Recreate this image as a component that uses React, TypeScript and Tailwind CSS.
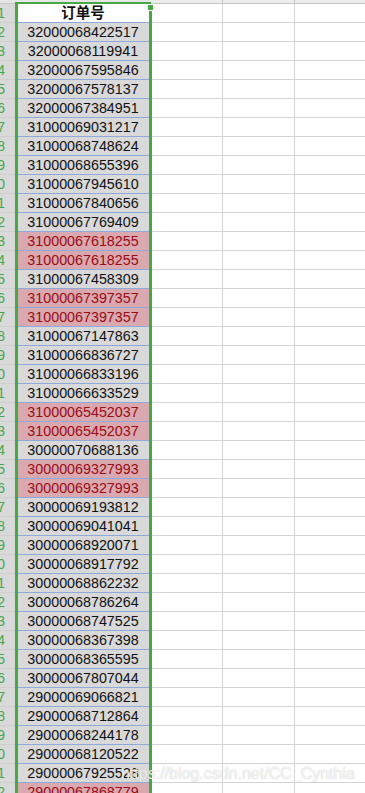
const orders: { id: string; dup?: boolean }[] = [
  { id: '32000068422517' },
  { id: '32000068119941' },
  { id: '32000067595846' },
  { id: '32000067578137' },
  { id: '32000067384951' },
  { id: '31000069031217' },
  { id: '31000068748624' },
  { id: '31000068655396' },
  { id: '31000067945610' },
  { id: '31000067840656' },
  { id: '31000067769409' },
  { id: '31000067618255', dup: true },
  { id: '31000067618255', dup: true },
  { id: '31000067458309' },
  { id: '31000067397357', dup: true },
  { id: '31000067397357', dup: true },
  { id: '31000067147863' },
  { id: '31000066836727' },
  { id: '31000066833196' },
  { id: '31000066633529' },
  { id: '31000065452037', dup: true },
  { id: '31000065452037', dup: true },
  { id: '30000070688136' },
  { id: '30000069327993', dup: true },
  { id: '30000069327993', dup: true },
  { id: '30000069193812' },
  { id: '30000069041041' },
  { id: '30000068920071' },
  { id: '30000068917792' },
  { id: '30000068862232' },
  { id: '30000068786264' },
  { id: '30000068747525' },
  { id: '30000068367398' },
  { id: '30000068365595' },
  { id: '30000067807044' },
  { id: '29000069066821' },
  { id: '29000068712864' },
  { id: '29000068244178' },
  { id: '29000068120522' },
  { id: '29000067925528' },
  { id: '29000067868779', dup: true },
];

function Row({ num, children, cellClass }: { num: number; children: React.ReactNode; cellClass: string }) {
  return (
    <div className="flex h-[19px] shrink-0">
      <div className="w-[15px] shrink-0 overflow-hidden bg-[#d9d9d9] border-b border-[#cfcfcf] flex justify-end pr-[10px] text-[14px] leading-[18px] text-[#45a845]">
        <span className="whitespace-nowrap">{num}</span>
      </div>
      <div className={`w-[136px] shrink-0 border-b border-[#8eaadb] text-center text-[14.3px] leading-[18px] ${cellClass}`}>
        {children}
      </div>
      <div className="w-[72px] shrink-0 border-b border-r border-[#d4d4d4] bg-white" />
      <div className="w-[72px] shrink-0 border-b border-r border-[#d4d4d4] bg-white" />
      <div className="flex-1 border-b border-[#d4d4d4] bg-white" />
    </div>
  );
}

export default function App() {
  return (
    <div className="relative w-[365px] h-[793px] overflow-hidden bg-white font-['Liberation_Sans','Noto_Sans_CJK_SC',sans-serif]">
      {/* column header strip, cut off at the top */}
      <div className="flex h-[4px]">
        <div className="w-[15px] bg-[#e6e6e6] border-b border-[#c8c8c8]" />
        <div className="w-[136px] bg-[#e6e6e6] border-b-2 border-[#45a845]" />
        <div className="w-[72px] bg-[#ececec] border-b border-r border-[#c8c8c8]" />
        <div className="w-[72px] bg-[#ececec] border-b border-r border-[#c8c8c8]" />
        <div className="flex-1 bg-[#ececec] border-b border-[#c8c8c8]" />
      </div>

      <Row num={1} cellClass="bg-white text-[#111] font-bold text-[14.5px]">
        订单号
      </Row>
      {orders.map((o, i) => (
        <Row
          key={i}
          num={i + 2}
          cellClass={o.dup ? 'bg-[#daa9af] text-[#9c0a14]' : 'bg-[#d9d9d9] text-[#111]'}
        >
          {o.id}
        </Row>
      ))}

      {/* selection border of column A */}
      <div className="absolute left-[15px] top-[2px] bottom-0 w-[3px] bg-[#45a845]" />
      <div className="absolute left-[149px] top-[11px] bottom-0 w-[3px] bg-[#45a845]" />
      <div className="absolute left-[148px] top-[5px] w-[5px] h-[5px] bg-[#45a845]" />

      {/* watermark */}
      <div className="absolute left-[121px] top-[764px] text-[16px] leading-[20px] text-white/80 whitespace-nowrap [text-shadow:0_0_1px_rgba(120,120,120,0.5)]">
        https://blog.csdn.net/CC_Cynthia
      </div>
    </div>
  );
}
